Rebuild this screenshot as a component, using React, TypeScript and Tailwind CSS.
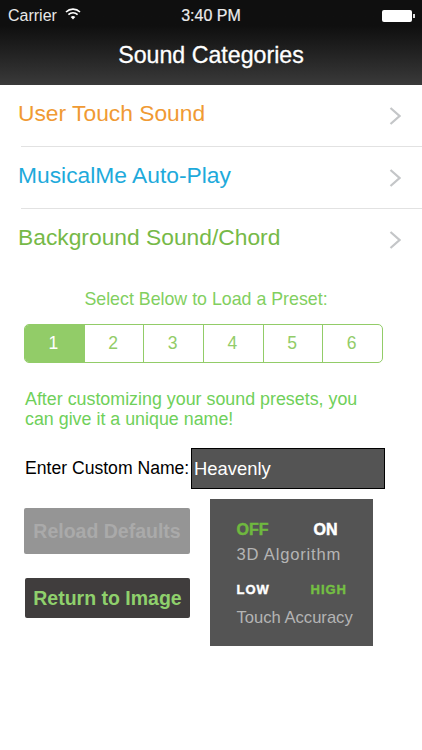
const font = { fontFamily: '"Liberation Sans", Arial, sans-serif' };

function Chevron() {
  return (
    <svg width="12" height="20" viewBox="0 0 12 20" fill="none" className="shrink-0">
      <path d="M1.5 2l9 8-9 8" stroke="#c4c6c8" strokeWidth="2.2" />
    </svg>
  );
}

function Row({ label, color, divider }: { label: string; color: string; divider: boolean }) {
  return (
    <div className="relative flex h-[62px] items-center justify-between pl-[18px] pr-[21px]">
      <span className={`text-[22.8px] leading-none ${color} -mt-[5px]`}>{label}</span>
      <Chevron />
      {divider && <div className="absolute bottom-0 left-[21px] right-0 h-px bg-[#e2e2e2]" />}
    </div>
  );
}

export default function App() {
  return (
    <div className="h-[750px] w-[422px] overflow-hidden bg-white" style={font}>
      <header className="h-[85px] bg-gradient-to-b from-[#0f0f0f] from-30% to-[#3a3a3a] text-white">
        <div className="flex h-[30px] items-center justify-between pl-[8px] pr-[7px] pt-[1px]">
          <div className="flex w-[140px] items-center gap-[8px]">
            <span className="text-[16px] text-[#e8e8e8]">Carrier</span>
            <svg width="16" height="12" viewBox="0 0 16 12" fill="none" stroke="#fff" strokeWidth="1.6" className="-mt-[3px]">
              <path d="M1 4a10 10 0 0 1 14 0" />
              <path d="M3.4 6.6a6.6 6.6 0 0 1 9.2 0" />
              <path d="M8 11.5l-2.3-2.4a3.2 3.2 0 0 1 4.6 0z" fill="#fff" stroke="none" />
            </svg>
          </div>
          <span className="-ml-[1px] text-[16px] text-[#ececec] [-webkit-text-stroke:0.2px_#ececec]">3:40 PM</span>
          <div className="flex w-[140px] items-center justify-end">
            <div className="h-[12px] w-[30px] rounded-[2px] bg-white" />
            <div className="ml-[1px] h-[4px] w-[2px] bg-[#ddd]" />
          </div>
        </div>
        <div className="flex h-[52px] items-center justify-center text-[23.2px] font-normal leading-none text-white [-webkit-text-stroke:0.3px_white]">
          Sound Categories
        </div>
      </header>

      <Row label="User Touch Sound" color="text-[#f09a33]" divider />
      <Row label="MusicalMe Auto-Play" color="text-[#1eaadb]" divider />
      <Row label="Background Sound/Chord" color="text-[#76b947]" divider={false} />

      <p className="mt-[18px] pr-[10px] text-center text-[17.8px] leading-[20px] text-[#82cf5f]">Select Below to Load a Preset:</p>

      <div className="ml-[24px] mt-[15px] flex h-[39px] w-[359px] overflow-hidden rounded-[5px] border border-[#92cc68] text-[17.5px] text-[#92cc68]">
        {["1", "2", "3", "4", "5", "6"].map((n, i) => (
          <div
            key={n}
            className={`flex flex-1 items-center justify-center pr-[2px] ${i === 0 ? "bg-[#92cc68] text-white" : "border-l border-[#92cc68]"}`}
          >
            {n}
          </div>
        ))}
      </div>

      <p className="ml-[25px] mt-[26px] w-[350px] text-[17.85px] leading-[20px] text-[#6fd05a]">
        After customizing your sound presets, you can give it a unique name!
      </p>

      <div className="ml-[25px] mt-[19px] flex items-center">
        <span className="w-[166px] whitespace-nowrap text-[17.6px] leading-none text-black">Enter Custom Name:</span>
        <div className="flex h-[41px] w-[194px] items-center border-[1.5px] border-black bg-[#545454] pl-[2px] text-[18.4px] text-white">
          Heavenly
        </div>
      </div>

      <div className="mt-[10px] flex items-start">
        <div className="ml-[24px] mt-[9px] flex w-[166px] flex-col items-end">
          <div className="flex h-[46px] w-[166px] items-center justify-center rounded-[2px] bg-[#959595] pt-[1px] text-[19.5px] font-bold text-[#aaaaaa]">
            Reload Defaults
          </div>
          <div className="mt-[24px] flex h-[40px] w-[165px] items-center justify-center rounded-[2px] bg-[#403d3d] pt-[1px] text-[19.5px] font-bold text-[#8fd06c]">
            Return to Image
          </div>
        </div>
        <div className="ml-[19.5px] h-[147px] w-[163.5px] bg-[#545454] pl-[27px] pt-[23px] text-[#b4b4b4]">
          <div className="flex h-[16px] items-center text-[16px] font-bold leading-none">
            <span className="w-[77px] text-[#6fb83f] [-webkit-text-stroke:0.5px_#6fb83f]">OFF</span>
            <span className="text-white [-webkit-text-stroke:0.5px_white]">ON</span>
          </div>
          <div className="mt-[7px] text-[16.6px] leading-[20px] tracking-[0.8px]">3D Algorithm</div>
          <div className="mt-[16px] flex h-[16px] items-center text-[13px] font-bold leading-none tracking-[1px]">
            <span className="w-[74px] text-white [-webkit-text-stroke:0.4px_white]">LOW</span>
            <span className="text-[#74c043] [-webkit-text-stroke:0.4px_#74c043]">HIGH</span>
          </div>
          <div className="mt-[11px] text-[16.6px] leading-[20px]">Touch Accuracy</div>
        </div>
      </div>
    </div>
  );
}
